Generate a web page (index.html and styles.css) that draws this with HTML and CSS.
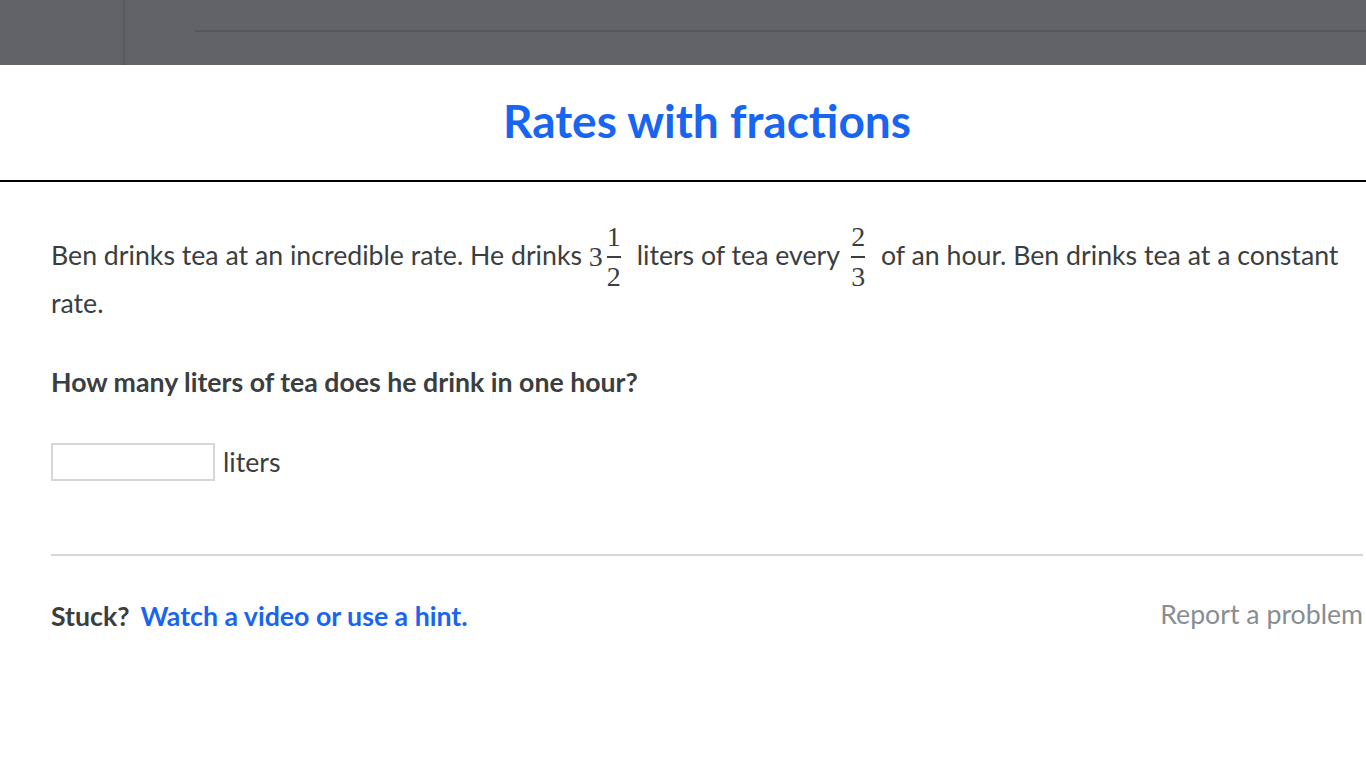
FILE: index.html
```html
<!DOCTYPE html>
<html>
<head>
<meta charset="utf-8">
<link rel="stylesheet" href="styles.css">
</head>
<body>
<div class="topbar">
  <div class="topbar-left"></div>
  <div class="topbar-right"><div class="topbar-line"></div></div>
</div>
<header class="title-area">
  <h1 class="title">Rates with fractions</h1>
</header>
<main class="content">
  <p class="problem">Ben drinks tea at an incredible rate. He drinks <span class="math"><span class="whole">3</span><span class="frac"><span class="num">1</span><span class="bar"></span><span class="den">2</span></span></span> liters of tea every <span class="math"><span class="frac"><span class="num">2</span><span class="bar"></span><span class="den">3</span></span></span> of an hour. Ben drinks tea at a constant rate.</p>
  <p class="question">How many liters of tea does he drink in one hour?</p>
  <div class="answer-row">
    <input class="answer" type="text">
    <span class="unit">liters</span>
  </div>
  <div class="divider"></div>
  <div class="footer">
    <div class="stuck"><span class="stuck-label">Stuck?</span><a class="hint" href="#">Watch a video or use a hint.</a></div>
    <a class="report" href="#">Report a problem</a>
  </div>
</main>
</body>
</html>
```
FILE: styles.css
```css
* { box-sizing: border-box; }
html, body { margin: 0; padding: 0; background: #fff; }
body { font-family: Lato, "Open Sans", sans-serif; color: #3b3e40; }

.topbar { height: 65px; background: #626369; display: flex; }
.topbar-left { width: 125px; border-right: 2px solid #58595e; }
.topbar-right { flex: 1; padding-left: 70px; padding-top: 30px; }
.topbar-line { height: 2px; background: #55565b; }

.title-area { height: 117px; border-bottom: 2px solid #000; display: flex; justify-content: center; align-items: center; padding-bottom: 4px; }
.title { margin: 0; font-size: 46px; font-weight: 700; color: #1865f2; padding-left: 48px; }

.content { padding: 49px 3px 0 51px; }
.problem { margin: 0; font-size: 26.7px; line-height: 48px; }
.math { font-family: "Liberation Serif", "DejaVu Serif", serif; display: inline-flex; align-items: center; vertical-align: middle; margin: -14px 0; position: relative; top: -1px; }
.whole { font-size: 28px; line-height: 28px; margin-right: -1px; }
.frac { display: inline-flex; flex-direction: column; align-items: center; font-size: 28px; line-height: 26px; padding: 0 9px 0 5px; }
.bar { width: 14px; height: 2px; background: #3b3e40; margin: 6px 0 6px; }

.question { margin: 37px 0 0; font-size: 26.7px; font-weight: 700; line-height: 36px; }

.answer-row { display: flex; align-items: center; margin-top: 43px; gap: 8px; }
.answer { width: 164px; height: 38px; border: 2px solid #d6d6d6; margin: 0; padding: 0; }
.unit { font-size: 26.7px; }

.divider { height: 2px; background: #d6d6d6; margin-top: 73px; }

.footer { display: flex; justify-content: space-between; align-items: center; margin-top: 44px; }
.stuck { font-size: 26.7px; font-weight: 700; display: flex; gap: 11px; }
.hint { color: #1865f2; text-decoration: none; }
.report { font-size: 26.7px; color: #888d93; text-decoration: none; margin-top: -4px; }
```
